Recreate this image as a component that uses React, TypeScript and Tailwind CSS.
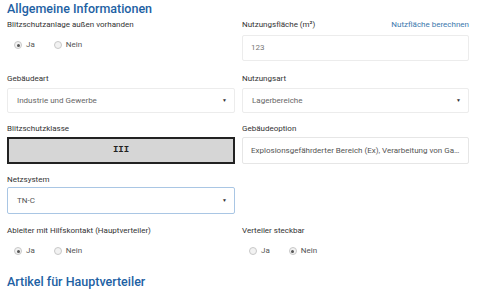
import React from "react";

function Radio({ label, checked }: { label: string; checked?: boolean }) {
  return (
    <label className="flex items-center gap-[4px] mr-[19px]">
      <span className="flex h-[8px] w-[8px] items-center justify-center rounded-full border border-[#c8c8c8] bg-[#f2f2f2]">
        {checked && <span className="h-[3px] w-[3px] rounded-full bg-[#555]" />}
      </span>
      <span>{label}</span>
    </label>
  );
}

function Caret() {
  return <span className="text-[5px] leading-none text-[#333]">▼</span>;
}

export default function App() {
  return (
    <div
      className="h-[294px] w-[480px] overflow-hidden bg-white pl-[7px] pr-[11px] text-[8px] text-[#333]"
      style={{ fontFamily: "Roboto, 'Liberation Sans', sans-serif" }}
    >
      <h2 className="h-[19px] pt-[1px] text-[12.5px] font-medium leading-[16px] text-[#1d61a3]">Allgemeine Informationen</h2>

      <div className="grid grid-cols-[228px_227px] gap-x-[7px]">
        {/* row 1 */}
        <div>
          <div className="h-[12px] leading-[12px]">Blitzschutzanlage außen vorhanden</div>
          <div className="mt-[7px] flex h-[14px] items-center pl-[7px] text-[#555]">
            <Radio label="Ja" checked />
            <Radio label="Nein" />
          </div>
        </div>
        <div>
          <div className="flex h-[12px] justify-between leading-[12px]">
            <span>Nutzungsfläche (m²)</span>
            <span className="text-[#3b78ad]">Nutzfläche berechnen</span>
          </div>
          <div className="mt-[4px] flex h-[26px] items-center rounded-[2px] border border-[#ececec] px-[8px] text-[#777]">123</div>
        </div>

        {/* row 2 */}
        <div className="mt-[12px]">
          <div className="h-[12px] leading-[12px]">Gebäudeart</div>
          <div className="mt-[3px] flex h-[25px] items-center justify-between rounded-[2px] border border-[#ececec] pl-[9px] pr-[7px] text-[#666]">
            <span>Industrie und Gewerbe</span>
            <Caret />
          </div>
        </div>
        <div className="mt-[12px]">
          <div className="h-[12px] leading-[12px]">Nutzungsart</div>
          <div className="mt-[3px] flex h-[25px] items-center justify-between rounded-[2px] border border-[#ececec] pl-[9px] pr-[7px] text-[#666]">
            <span>Lagerbereiche</span>
            <Caret />
          </div>
        </div>

        {/* row 3 */}
        <div className="mt-[10px]">
          <div className="h-[12px] leading-[12px]">Blitzschutzklasse</div>
          <div
            className="mt-[2px] flex h-[27px] items-center justify-center border-2 border-[#222] bg-[#d6d6d6] text-[9px] font-bold text-[#222]"
            style={{ fontFamily: "'Liberation Mono', monospace" }}
          >
            III
          </div>
        </div>
        <div className="mt-[10px]">
          <div className="h-[12px] leading-[12px]">Gebäudeoption</div>
          <div className="mt-[2px] flex h-[27px] items-center rounded-[2px] border border-[#e6e6e6] px-[8px] text-[#555]">
            <span className="truncate">Explosionsgefährderter Bereich (Ex), Verarbeitung von Gasen und Dämpfen</span>
          </div>
        </div>

        {/* row 4 */}
        <div className="mt-[10px]">
          <div className="h-[12px] leading-[12px]">Netzsystem</div>
          <div className="mt-[1px] flex h-[27px] w-[228px] items-center justify-between rounded-[2px] border border-[#a9c6e4] pl-[9px] pr-[7px] text-[#555]">
            <span>TN-C</span>
            <Caret />
          </div>
        </div>
        <div className="mt-[10px]" />

        {/* row 5 */}
        <div className="mt-[11px]">
          <div className="h-[12px] leading-[12px]">Ableiter mit Hilfskontakt (Hauptverteiler)</div>
          <div className="mt-[7px] flex h-[14px] items-center pl-[7px] text-[#555]">
            <Radio label="Ja" checked />
            <Radio label="Nein" />
          </div>
        </div>
        <div className="mt-[11px]">
          <div className="h-[12px] leading-[12px]">Verteiler steckbar</div>
          <div className="mt-[7px] flex h-[14px] items-center pl-[7px] text-[#555]">
            <Radio label="Ja" />
            <Radio label="Nein" checked />
          </div>
        </div>
      </div>

      <h2 className="mt-[16px] text-[12.5px] font-medium leading-[16px] text-[#1d61a3]">Artikel für Hauptverteiler</h2>
    </div>
  );
}
